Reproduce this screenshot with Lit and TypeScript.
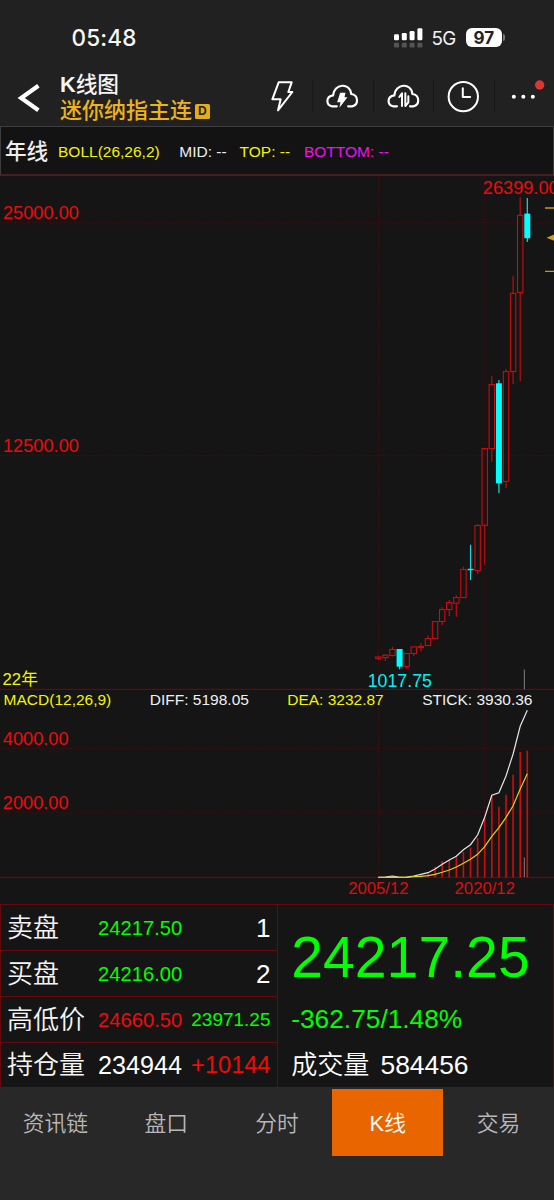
import { LitElement, html, svg, css } from "lit";
import { customElement } from "lit/decorators.js";

const X0 = 378.3;
const STEP = 7.095;
const xAt = (i: number) => X0 + i * STEP;

// [high, body top, body bottom, low, falling]
const candles: [number, number, number, number, boolean][] = [
  [655.6, 657, 658.6, 660, false],
  [654.6, 655.2, 657.6, 661, false],
  [646.7, 649.5, 655.4, 656.6, false],
  [649, 649, 666.7, 669.3, true],
  [653.3, 653.5, 666.5, 669, false],
  [646.5, 646.9, 653.5, 656.3, false],
  [643.3, 646.4, 647.4, 651.3, false],
  [635.3, 638.5, 645.5, 645.5, false],
  [621.3, 621.5, 638.5, 638.5, false],
  [607.3, 609.5, 621.5, 625, false],
  [600, 602.5, 609.5, 616, false],
  [595.3, 597.5, 603.2, 616.7, false],
  [566.7, 569.5, 597.5, 597.5, false],
  [544.7, 568.8, 570.2, 580, true],
  [524, 525.5, 570.5, 574, false],
  [448.3, 448.5, 525.3, 564.7, false],
  [376, 384.5, 448.5, 461.7, false],
  [380, 383.3, 483.3, 493, true],
  [369, 371.6, 481.4, 488, false],
  [276, 293.4, 371.5, 384, false],
  [197.3, 215.3, 292.4, 381.3, false],
  [198, 213.6, 238.2, 242, true],
];

const diff = [877.3, 877, 876, 877.3, 877, 876, 874.3, 872.7, 869, 864.3, 860, 856.3, 849.7, 844.7, 835, 817.3, 795.3, 792.7, 776, 754, 726.3, 710.3];
const dea = [877.3, 877.3, 877.3, 877.3, 877.3, 876.7, 876.3, 875.7, 874.3, 872.3, 870, 867, 863.3, 859.3, 854.3, 846.7, 836.3, 827.7, 817.3, 805.7, 789, 773.7];
const stick = [877, 877, 876, 877, 877, 876, 875, 873.5, 866.7, 861, 860, 857, 852, 847.5, 838, 818, 796, 806.7, 794.7, 774.7, 752, 750.7];
const points = (ys: number[]) => ys.map((y, i) => `${xAt(i).toFixed(1)},${y}`).join(" ");

@customElement("k-chart")
class KChart extends LitElement {
  static styles = css`
    :host { display: block; height: 728px; background: #151515; }
    svg { display: block; font-family: "Liberation Sans", "Noto Sans CJK SC", sans-serif; }
    .grid { stroke: #460b0e; stroke-width: 1; stroke-dasharray: 2 1.5; fill: none; }
    .axis { stroke: #66090d; stroke-width: 1.2; fill: none; }
    .up { stroke: #c80d10; stroke-width: 1.1; fill: none; }
    .up-wick { stroke: #b80d10; stroke-width: 1.2; }
    .down { fill: #00ffff; }
    .down-wick { stroke: #16dede; stroke-width: 1.2; }
    .bar { stroke: #d20c0e; stroke-width: 1.6; }
    .diff { stroke: #e6e6e6; stroke-width: 1.2; fill: none; }
    .dea { stroke: #e3d020; stroke-width: 1.2; fill: none; }
    .cursor { stroke: #6d6d6d; stroke-width: 1.2; }
    .mark { stroke: #c8961e; stroke-width: 1.4; }
    .arrow { fill: #d19b1f; }
    .red { fill: #ee0a0c; font-size: 18.2px; }
    .date { fill: #dc0d10; font-size: 16.7px; }
    .cyan { fill: #00f0f5; font-size: 17.8px; }
    .years { fill: #f4f400; font-size: 16.7px; }
    .ind { font-size: 15.5px; }
    .yellow { fill: #f4f400; }
    .white { fill: #f0f0f0; }
  `;
  render() {
    return html`<svg width="554" height="728" viewBox="0 176 554 728">
      ${[222.7, 455.7, 748.7, 812.8].map((y) => svg`<line class="grid" x1="0" x2="554" y1=${y} y2=${y}></line>`)}
      ${[378.3, 484.7].map((x) => svg`<path class="grid" d="M${x} 176V689M${x} 708V877"></path>`)}
      <line class="axis" x1="0" x2="554" y1="689.4" y2="689.4"></line>
      <line class="axis" x1="0" x2="554" y1="877.4" y2="877.4"></line>
      ${candles.map(([hi, t, b, lo, fall], i) => {
        const x = xAt(i);
        return fall
          ? svg`<line class="down-wick" x1=${x} x2=${x} y1=${hi} y2=${lo}></line><rect class="down" x=${x - 3} y=${t} width="6" height=${b - t}></rect>`
          : svg`<path class="up-wick" d="M${x} ${hi}V${t}M${x} ${b}V${lo}"></path><rect class="up" x=${x - 2.7} y=${t} width="5.4" height=${b - t}></rect>`;
      })}
      ${stick.map((y, i) => svg`<line class="bar" x1=${xAt(i)} x2=${xAt(i)} y1=${y} y2="877.4"></line>`)}
      <polyline class="diff" points=${points(diff)}></polyline>
      <polyline class="dea" points=${points(dea)}></polyline>
      <path class="cursor" d="M524.4 669.5V689.5M524.4 857.5V877"></path>
      <path class="mark" d="M545 208H554M545 271.4H554"></path>
      <path class="arrow" d="M546.5 237.7L554 234.6V240.8Z"></path>
      <text class="red" x="482.8" y="194">26399.00</text>
      <text class="red" x="3" y="219.3">25000.00</text>
      <text class="red" x="3" y="452">12500.00</text>
      <text class="cyan" x="367.7" y="686.8">1017.75</text>
      <text class="years" x="2.6" y="684.6">22年</text>
      <text class="ind yellow" x="3.6" y="705.2">MACD(12,26,9)</text>
      <text class="ind white" x="149.8" y="705.2">DIFF: 5198.05</text>
      <text class="ind yellow" x="287.2" y="705.2">DEA: 3232.87</text>
      <text class="ind white" x="422.2" y="705.2">STICK: 3930.36</text>
      <text class="red" x="2.8" y="745">4000.00</text>
      <text class="red" x="2.8" y="809">2000.00</text>
      <text class="date" x="348.2" y="894">2005/12</text>
      <text class="date" x="454.6" y="894">2020/12</text>
    </svg>`;
  }
}

@customElement("app-root")
class AppRoot extends LitElement {
  static styles = css`
    :host {
      display: flex; flex-direction: column; width: 554px; height: 1200px; overflow: hidden;
      background: #282828; color: #fff; box-sizing: border-box;
      font-family: "Liberation Sans", "Noto Sans CJK SC", sans-serif;
    }
    * { box-sizing: border-box; white-space: nowrap; }
    svg { display: block; }
    .top { height: 126px; background: #212121; }
    .status { height: 67px; display: flex; align-items: center; padding: 8px 49px 0 71.5px; font-family: Inter, sans-serif; }
    .time { font-size: 22.5px; font-weight: 500; letter-spacing: 0.2px; color: #f8f8f8; flex: 1; }
    .net { font-size: 18.8px; width: 34px; letter-spacing: -0.6px; margin-left: 8.5px; color: #f0f0f0; padding-top: 2px; }
    .battery { width: 36.5px; height: 19.5px; border-radius: 6px; background: #fff; color: #222; font-size: 17px; font-weight: 700; line-height: 20px; text-align: center; }
    .nub { width: 2px; height: 6.5px; border-radius: 0 2px 2px 0; background: #777; margin-left: 1px; }
    .bar { display: flex; align-items: center; height: 59px; }
    .back { width: 60px; flex: none; padding-left: 17px; }
    .titles { width: 192.8px; flex: none; display: flex; flex-direction: column; padding-top: 3.5px; }
    .title { font-size: 21.7px; line-height: 26px; font-weight: 500; color: #f5f5f5; }
    .k { font-weight: 700; }
    .name { display: flex; align-items: center; font-size: 22px; line-height: 26px; font-weight: 500; color: #edb31a; }
    .tag { width: 14.5px; height: 14.5px; margin-left: 3px; border-radius: 1.5px; background: #e3ae16; color: #222; font-size: 12px; line-height: 15px; font-weight: 700; text-align: center; }
    .tool { width: 60.5px; height: 33px; flex: none; display: flex; justify-content: center; align-items: center; border-right: 1.5px solid #191919; }
    .tool:last-child { width: 59px; border-right: 0; }
    .ln { fill: none; stroke: #fff; stroke-width: 6.5; stroke-linejoin: round; stroke-linecap: round; }
    .thin { stroke-width: 6; }
    .fill { fill: #fff; }
    .dot { fill: #dd3733; }
    .boll { height: 50px; display: flex; align-items: center; background: #131313; border: 1px solid #3d3d3d; border-bottom: 2px solid #4a1c1f; padding: 2.2px 0 0 4px; font-size: 15.5px; }
    .period { font-size: 21.6px; font-weight: 500; width: 53px; line-height: 30px; color: #eee; }
    .boll .yellow { color: #f4f400; }
    .boll .white { color: #eee; }
    .boll .magenta { color: #f010f0; }
    .c1 { width: 121.3px; }
    .c2 { width: 60.3px; }
    .c3 { width: 64.3px; }
    .quote { display: flex; height: 184px; background: #151515; border: 1px solid #66090d; border-bottom-color: #6a0d12; }
    .left { width: 277px; border-right: 1px solid #66090d; display: grid; grid-template-rows: 46px 46px 46px 44px; }
    .row { display: flex; align-items: center; padding: 0 6.5px 0 6px; border-bottom: 1px solid #66090d; }
    .row:last-child { border-bottom: 0; }
    .label { width: 91px; font-size: 26px; line-height: 38px; font-weight: 350; color: #f5f5f5; }
    .price { flex: 1; font-size: 20.2px; padding-top: 1px; }
    .qty { font-size: 26px; padding-top: 1px; }
    .low { font-size: 19px; }
    .oi { font-size: 25.2px; }
    .delta { font-size: 23.6px; }
    .green { color: #0f0; }
    .red { color: #f00a0a; }
    .right { flex: 1; display: flex; flex-direction: column; padding-left: 13.2px; }
    .last { font-size: 57.2px; line-height: 64px; margin-top: 20px; }
    .chg { font-size: 26.3px; line-height: 32px; margin-top: 14px; }
    .vol { display: flex; align-items: center; font-size: 26.4px; line-height: 38px; margin-top: 10.5px; gap: 11px; }
    .vol-label { font-size: 26.1px; font-weight: 350; }
    .nav { display: flex; padding-top: 1px; background: #282828; height: 112px; }
    .tab { flex: 1; height: 67px; display: flex; align-items: center; justify-content: center; padding-bottom: 2px; font-size: 21.8px; font-weight: 350; color: #b8b8b8; }
    .active { background: #e96500; color: #fff; }
  `;

  tool(cx: number, art: unknown) {
    return html`<div class="tool"><svg width="40" height="40" viewBox="${cx - 60} 230 120 120" overflow="visible">${art}</svg></div>`;
  }

  render() {
    return html`
      <div class="top">
        <div class="status">
          <span class="time">05:48</span>
          <svg width="29" height="20" viewBox="0 0 29 20">
            <g class="fill">
              <rect x="0" y="6.2" width="5" height="6" rx="1.3"></rect><rect x="7.8" y="5" width="5" height="7.2" rx="1.3"></rect>
              <rect x="15.6" y="3" width="5" height="9.2" rx="1.3"></rect><rect x="23.4" y="0.3" width="5" height="11.9" rx="1.3"></rect>
            </g>
            <g fill="#555">
              <rect x="0" y="14.8" width="5" height="4.8" rx="1.3"></rect><rect x="7.8" y="14.8" width="5" height="4.8" rx="1.3"></rect>
              <rect x="15.6" y="14.8" width="5" height="4.8" rx="1.3"></rect><rect x="23.4" y="14.8" width="5" height="4.8" rx="1.3"></rect>
            </g>
          </svg>
          <span class="net">5G</span>
          <span class="battery">97</span><span class="nub"></span>
        </div>
        <div class="bar">
          <div class="back"><svg width="23" height="30" viewBox="0 0 23 30"><path d="M21.4 3.8L4.2 16L21.4 28.2" fill="none" stroke="#fff" stroke-width="4.2"></path></svg></div>
          <div class="titles">
            <div class="title"><span class="k">K</span>线图</div>
            <div class="name">迷你纳指主连<span class="tag">D</span></div>
          </div>
          ${this.tool(75, svg`<path class="ln thin" d="M62 246H101L91 275H103L60 330L68 297H43Z"></path>`)}
          ${this.tool(256.6, svg`<path class="ln" d="M238 318H224C205 315 204 288 227 285C229 250 278 245 281 281C304 284 304 314 284 318H272"></path><path class="fill" d="M248 277H264L261 291H270L246 322L249 306H239Z"></path>`)}
          ${this.tool(438, svg`<path class="ln" d="M417 318H406C387 315 386 288 409 285C411 250 460 245 463 281C486 284 486 314 466 318H456"></path><path class="ln thin" d="M424 290L432 279V317M442 279V317L451 306V288"></path>`)}
          ${this.tool(619.6, svg`<circle class="ln thin" cx="617.5" cy="289" r="44"></circle><path class="ln thin" d="M616 264V290H638"></path>`)}
          ${this.tool(801, svg`<g class="fill"><circle cx="770.5" cy="289" r="6"></circle><circle cx="799" cy="289" r="6"></circle><circle cx="827.5" cy="289" r="6"></circle></g><circle class="dot" cx="848" cy="254" r="14"></circle>`)}
        </div>
      </div>
      <div class="boll">
        <span class="period">年线</span>
        <span class="yellow c1">BOLL(26,26,2)</span>
        <span class="white c2">MID: --</span>
        <span class="yellow c3">TOP: --</span>
        <span class="magenta">BOTTOM: --</span>
      </div>
      <k-chart></k-chart>
      <div class="quote">
        <div class="left">
          <div class="row"><span class="label">卖盘</span><span class="price green">24217.50</span><span class="qty">1</span></div>
          <div class="row"><span class="label">买盘</span><span class="price green">24216.00</span><span class="qty">2</span></div>
          <div class="row"><span class="label">高低价</span><span class="price red">24660.50</span><span class="low green">23971.25</span></div>
          <div class="row"><span class="label">持仓量</span><span class="price oi">234944</span><span class="delta red">+10144</span></div>
        </div>
        <div class="right">
          <div class="last green">24217.25</div>
          <div class="chg green">-362.75/1.48%</div>
          <div class="vol"><span class="vol-label">成交量</span><span>584456</span></div>
        </div>
      </div>
      <div class="nav">
        <div class="tab">资讯链</div><div class="tab">盘口</div><div class="tab">分时</div><div class="tab active">K线</div><div class="tab">交易</div>
      </div>
    `;
  }
}
